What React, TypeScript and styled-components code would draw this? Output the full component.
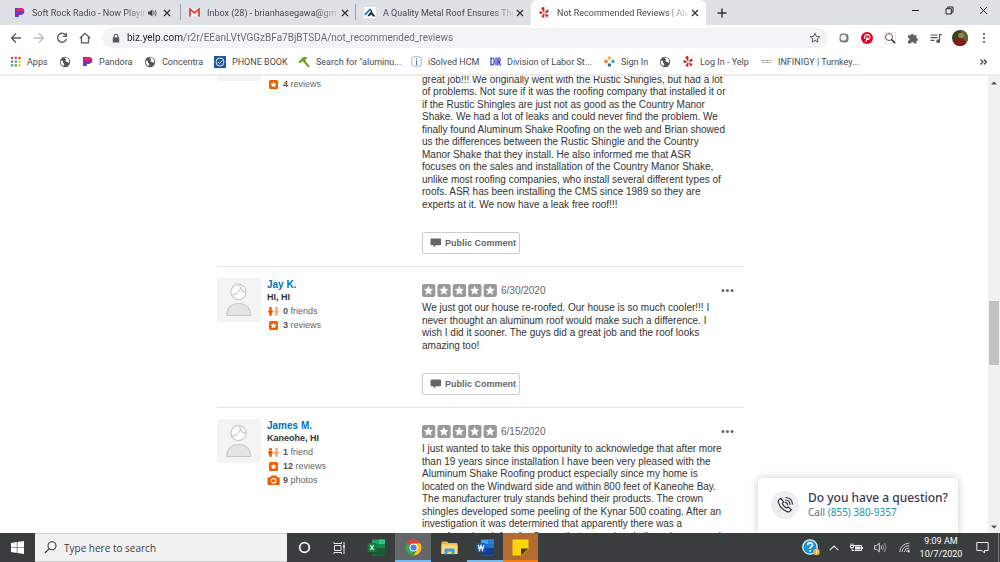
import React from "react";
import styled, { createGlobalStyle, css } from "styled-components";

const uiFont = `"Open Sans", "Noto Sans", sans-serif`;
const pageFont = `"Liberation Sans", Arial, sans-serif`;

const GlobalStyle = createGlobalStyle`
  * { box-sizing: border-box; }
  body { margin: 0; background: #fff; overflow: hidden; }
  button, input { font: inherit; color: inherit; margin: 0; padding: 0; border: 0; background: none; outline: 0; }
  a { color: inherit; text-decoration: none; }
  svg { display: block; flex: none; }
`;

const Screen = styled.div`
  display: flex;
  flex-direction: column;
  height: 100vh;
  font-family: ${uiFont};
`;

/* ---------- browser chrome ---------- */

const TabStrip = styled.header`
  display: flex;
  align-items: stretch;
  height: 25px;
  padding-left: 6px;
  background: #dee1e6;
  color: #45494d;
  font-family: Roboto, sans-serif;
  font-size: 9px;
`;

const Tab = styled.div<{ $active?: boolean; $divider?: boolean }>`
  display: flex;
  align-items: center;
  flex: 0 1 175px;
  min-width: 0;
  gap: 3px;
  padding: 0 6px 0 8px;
  border-radius: 6px 6px 0 0;
  border-right: 1px solid transparent;
  border-image: ${(p) => (p.$divider ? "linear-gradient(transparent 20%, #9a9da1 20%, #9a9da1 78%, transparent 78%) 1" : "none")};
  background: ${(p) => (p.$active ? "#fff" : "transparent")};
`;

const TabTitle = styled.button`
  flex: 1;
  min-width: 0;
  padding-left: 4px;
  white-space: nowrap;
  text-align: left;
  line-height: 14px;
  mask-image: linear-gradient(90deg, #000 84%, rgba(0, 0, 0, 0.15));
`;

const IconButton = styled.button<{ $size?: number }>`
  display: grid;
  place-items: center;
  flex: none;
  width: ${(p) => p.$size ?? 12}px;
  height: ${(p) => p.$size ?? 12}px;
`;

const NewTab = styled(IconButton)`
  align-self: center;
`;

const WindowControls = styled.div`
  display: flex;
  align-items: center;
  gap: 22px;
  height: 21px;
  margin-left: auto;
  padding-right: 11px;
`;

const Toolbar = styled.nav`
  display: flex;
  align-items: center;
  gap: 9px;
  height: 26px;
  padding: 0 9px 0 10px;
  background: #fff;
  color: #5f6368;
`;

const NavButtons = styled.div`
  display: flex;
  gap: 11px;
`;

const Omnibox = styled.label`
  display: flex;
  align-items: center;
  flex: 1;
  gap: 6px;
  height: 20px;
  margin-left: 2px;
  padding: 0 7px 0 9px;
  border-radius: 10px;
  background: #f1f3f4;
`;

const Address = styled.input`
  flex: 1;
  min-width: 0;
  font-family: Roboto, sans-serif;
  font-size: 10px;
  line-height: 14px;
  background: linear-gradient(90deg, #202124 56px, #63676b 56px);
  background-clip: text;
  -webkit-text-fill-color: transparent;
`;

const Extensions = styled.div`
  display: flex;
  align-items: center;
  gap: 9px;
`;

const BookmarksBar = styled.nav`
  display: flex;
  align-items: center;
  height: 25px;
  padding: 0 12px 2px 10px;
  border-bottom: 2px solid #ececec;
  background: #fff;
  color: #484b4f;
  font-family: Roboto, sans-serif;
  font-size: 9px;
`;

const Bookmark = styled.a<{ $width: number }>`
  display: flex;
  align-items: center;
  flex: 0 1 ${(p) => p.$width}px;
  gap: 6px;
  white-space: nowrap;
  line-height: 14px;
`;

const BookmarksMore = styled(IconButton)`
  margin-left: auto;
`;

/* ---------- page ---------- */

const Viewport = styled.div`
  position: relative;
  display: flex;
  flex: 1;
  min-height: 0;
  overflow: hidden;
  background: #fff;
  font-family: ${pageFont};
`;

const PageScroll = styled.main`
  display: grid;
  grid-template-columns: 217px minmax(0, 527px) 1fr;
  align-content: start;
  flex: 1;
  min-width: 0;
  overflow: hidden;
`;

const Feed = styled.div`
  grid-column: 2;
  margin-top: -51px;
`;

const Review = styled.article`
  display: grid;
  grid-template-columns: 44px 161px minmax(0, 1fr);
  padding: 11px 0 12px;
  border-top: 1px solid #e4e4e4;
`;

const Avatar = styled.div`
  display: grid;
  place-items: center;
  width: 44px;
  height: 44px;
  border-radius: 3px;
  background: #f4f4f4;
`;

const Passport = styled.ul`
  margin: 0;
  padding: 0 0 0 6px;
  list-style: none;
  color: #666;
  font-size: 9px;
`;

const PassportName = styled.li`
  height: 13px;
  color: #0073bb;
  font-size: 10px;
  font-weight: 700;
  line-height: 13px;
`;

const PassportPlace = styled.li`
  height: 13px;
  color: #333;
  font-weight: 700;
  line-height: 13px;
`;

const PassportStat = styled.li`
  display: flex;
  align-items: center;
  gap: 3px;
  height: 14px;
  line-height: 14px;

  b { color: #555; }
`;

const ReviewBody = styled.div`
  padding-top: 6px;
`;

const RatingRow = styled.div`
  display: flex;
  align-items: center;
  height: 13px;
  padding-right: 10px;
  gap: 4px;
  color: #666;
  font-size: 10px;

  button { margin-left: auto; }
`;

const ReviewText = styled.p`
  display: grid;
  grid-auto-rows: 13px 12px;
  margin: 4px 0 22px;
  color: #333;
  font-size: 10px;
  line-height: 13px;
  white-space: nowrap;
`;

const CommentButton = styled.button`
  display: flex;
  align-items: center;
  gap: 3px;
  width: 98px;
  height: 22px;
  padding-left: 7px;
  border: 1px solid #ccc;
  border-radius: 2px;
  background: #fff;
  color: #666;
  font-size: 9px;
  font-weight: 700;
  white-space: nowrap;
`;

const ScrollTrack = styled.div`
  display: flex;
  flex-direction: column;
  align-items: center;
  width: 12px;
  padding: 5px 0 4px;
  background: #f1f1f1;
`;

const ScrollThumb = styled.div`
  width: 10px;
  height: 64px;
  margin: 216px 0 auto;
  background: #c1c1c1;
`;

const CallCard = styled.aside`
  position: absolute;
  right: 42px;
  bottom: 0;
  display: flex;
  align-items: center;
  gap: 9px;
  width: 200px;
  height: 55px;
  padding: 0 0 1px 13px;
  border-radius: 4px 4px 0 0;
  background: #fff;
  box-shadow: 0 0 9px rgba(0, 0, 0, 0.22);
  color: #6b6b76;
  font-family: "Noto Sans", sans-serif;
  font-size: 10px;
  line-height: 15px;
  white-space: nowrap;

  a { color: #1d979b; }
`;

const CallIcon = styled.div`
  display: grid;
  place-items: center;
  width: 28px;
  height: 28px;
  border-radius: 50%;
  background: #eee;
`;

const CallTitle = styled.div`
  color: #3b3850;
  font-size: 12px;
  font-weight: 500;
`;

/* ---------- taskbar ---------- */

const Taskbar = styled.footer`
  display: flex;
  align-items: stretch;
  height: 29px;
  background: #393d3d;
  color: #fff;
`;

const TaskButton = styled.button<{ $width: number; $bg?: string; $line?: string }>`
  display: grid;
  place-items: center;
  width: ${(p) => p.$width}px;
  background: ${(p) => p.$bg ?? "none"};
  ${(p) => p.$line && css`box-shadow: inset 0 -2px ${p.$line};`}
`;

const SearchBox = styled.label`
  display: flex;
  align-items: center;
  gap: 7px;
  width: 252px;
  padding-left: 9px;
  border: 1px solid #cfcfcf;
  border-width: 1px 0;
  background: #f1f1f1;
  color: #3d3d3d;

  input { flex: 1; min-width: 0; font-size: 10px; }
  input::placeholder { color: #3d3d3d; opacity: 1; }
`;

const Tray = styled.div`
  display: flex;
  align-items: center;
  margin-left: auto;
  padding-right: 1px;
`;

const Clock = styled.time`
  width: 50px;
  font-family: Roboto, sans-serif;
  font-size: 9px;
  line-height: 13px;
  text-align: center;
  white-space: nowrap;
`;

const DesktopEdge = styled.div`
  width: 1px;
  height: 29px;
  background: #777;
`;

/* ---------- icons ---------- */

const Close = ({ size = 8 }: { size?: number }) => (
  <svg width={size} height={size} viewBox="0 0 8 8" stroke="#303338" strokeWidth="1.3" fill="none">
    <path d="M1 1l6 6M7 1L1 7" />
  </svg>
);

const PandoraIcon = () => (
  <svg width="11" height="11" viewBox="0 0 11 11">
    <path d="M1 1h5.4C9 1 10.3 2.4 10.3 4.200c0 2.200-1.700 3.700-4 3.700H4.700V10H1z" fill="#4a3fe0" />
    <path d="M4.500 1h1.900C9 1 10.300 2.400 10.300 4.200L3.500 5.500 1 2.800z" fill="#e02a5c" />
    <path d="M1 5.500l3.700.5 3.300-1-1.500 2.900H4.700V9L1 7.500z" fill="#9a2bb0" />
  </svg>
);

const GmailIcon = () => (
  <svg width="11" height="9" viewBox="0 0 11 9">
    <path d="M1 0.5h9v8H1z" fill="#fbeeee" />
    <path d="M1 8.5V1.2l4.500 3.700L10 1.200v7.300" fill="none" stroke="#d23f31" strokeWidth="1.700" />
  </svg>
);

const RoofIcon = () => (
  <svg width="12" height="11" viewBox="0 0 12 11">
    <path d="M0 0h12v11H0z" fill="#fff" />
    <path d="M.8 8L6 2.500 8 4.600" fill="none" stroke="#1c6fb3" strokeWidth="1.800" />
    <path d="M3.200 9.200L7.300 4 11.500 9.500H9L7.300 7.600 5.400 9.300z" fill="#1f2937" />
  </svg>
);

const YelpIcon = () => (
  <svg width="11" height="11" viewBox="0 0 10 11" fill="#d32323" stroke="#d32323" strokeWidth="0.300">
    <path d="M2.300.8C3 .3 4 .1 4.600.1l.2 4.400c0 .5-.4.6-.7.2L2 1.500c-.1-.3 0-.5.300-.7z" />
    <path d="M.4 4.200l3 1.200c.4.2.4.6 0 .7L.5 7C0 6.300 0 5 .4 4.200z" />
    <path d="M4 6.900c.3-.3.7-.1.7.3v3.200c-.8.2-2-.3-2.500-1z" />
    <path d="M6 6.900l2.900 1.200c-.2.900-1 1.800-1.800 2.100L5.600 7.500c-.1-.4.100-.7.400-.6z" />
    <path d="M5.700 5.200l2-2.600c.7.400 1.400 1.400 1.500 2.200L6.100 5.900c-.4.100-.7-.3-.4-.7z" />
  </svg>
);

const SpeakerTabIcon = () => (
  <svg width="9" height="8" viewBox="0 0 9 8" fill="#404347">
    <path d="M0 2.600h1.800L4.400.5v7L1.800 5.400H0z" />
    <path d="M5.600 2q1.200 2 0 4M7.200.9q2 3.100 0 6.200" fill="none" stroke="#404347" strokeWidth="0.800" />
  </svg>
);

const GlobeIcon = () => (
  <svg width="12" height="12" viewBox="0 0 12 12">
    <circle cx="6" cy="6" r="5.200" fill="#54575b" />
    <path d="M1.800 4.500c1.500 0 2.400.7 2.200 1.800-.2.900 1.300.9 1.200 2.200 0 .7-.6 1.200-1 1.600C2.200 9 1.200 7 1.800 4.500zM5.500 1.700c.4 1.300 1.300.8 1.600 1.700.3.900-.9 1-.6 1.800.4.700 1.700.3 2.500 1 .6.500.6 1 1 .6.700-2-.5-4.600-2.500-5.300z" fill="#fff" />
  </svg>
);

const AppsIcon = () => (
  <svg width="11" height="11" viewBox="0 0 11 11">
    {["#ea4335", "#ea4335", "#ea4335", "#34a853", "#4285f4", "#fbbc05", "#34a853", "#34a853", "#fbbc05"].map((c, i) => (
      <rect key={i} x={1 + (i % 3) * 3.7} y={0.8 + Math.floor(i / 3) * 3.7} width="2.200" height="2.200" fill={c} />
    ))}
  </svg>
);

const PhoneBookIcon = () => (
  <svg width="12" height="12" viewBox="0 0 12 12">
    <path d="M0 0h12v12H0z" fill="#1b59a5" />
    <circle cx="6" cy="6" r="4" fill="none" stroke="#dbe8f6" strokeWidth="1" />
    <path d="M4 6l1.500 1.500L8.200 4.500" fill="none" stroke="#dbe8f6" strokeWidth="1" />
  </svg>
);

const HammerIcon = () => (
  <svg width="12" height="12" viewBox="0 0 12 12">
    <path d="M0 6.400L4.500 1.600c1.600-.9 3.300-.9 5.500-.2L7.300 3.200l.8 1L6.600 5.800 5 4.600 2.600 7z" fill="#6b9a1f" />
    <path d="M5.500 4.500l5.500 6.300" stroke="#6b9a1f" strokeWidth="2" />
  </svg>
);

const InfoIcon = () => (
  <svg width="11" height="11" viewBox="0 0 11 11" fill="none" stroke="#4d78b5">
    <rect x="0.800" y="0.800" width="9.400" height="9.400" rx="2" stroke="#9bb4d6" />
    <path d="M5.500 4.500V9M5.500 2.300v1.200" strokeWidth="1.200" />
  </svg>
);

const DirIcon = () => (
  <svg width="11" height="9" viewBox="0 0 11 9" fill="none" stroke="#2c2fe0" strokeWidth="1.200">
    <path d="M1 1v7h1.200C4 8 4.200 6.500 4.200 4.500S4 1 2.200 1zM6 .5v8M7.900 8.500V1h1c1.800 0 1.800 3.400 0 3.400h-1M9 4.500l1.500 4" />
  </svg>
);

const SignInIcon = () => (
  <svg width="11" height="11" viewBox="0 0 11 11">
    <path d="M3.800.5h3.200v3H3.800z" fill="#e9b04c" />
    <path d="M.5 3.800h3v3.200h-3z" fill="#e8793a" />
    <path d="M7.500 3.800h3v3.200h-3z" fill="#35a0c4" />
    <path d="M3.800 7.500h3.200v3H3.800z" fill="#36718c" />
  </svg>
);

const InfinigyIcon = () => (
  <svg width="11" height="5" viewBox="0 0 11 5" stroke="#a3a3a3" fill="none">
    <path d="M0 1.500h11M1 3.500h9" strokeDasharray="2 0.500" />
  </svg>
);

const NavIcon = ({ d, color = "#55595d" }: { d: string; color?: string }) => (
  <svg width="12" height="12" viewBox="0 0 12 12" fill="none" stroke={color} strokeWidth="1.300">
    <path d={d} />
  </svg>
);

const LockIcon = () => (
  <svg width="10" height="11" viewBox="0 0 10 11">
    <path d="M1.800 4.300h6.400v5.200H1.800z" fill="#54585c" />
    <path d="M3.200 4.500V3a1.800 1.800 0 013.600 0v1.500" fill="none" stroke="#54585c" strokeWidth="1.100" />
  </svg>
);

const StarOutline = () => (
  <svg width="12" height="12" viewBox="0 0 12 12" fill="none" stroke="#55595d" strokeWidth="1">
    <path d="M6 1.300l1.400 3.100 3.400.3-2.600 2.200.8 3.300L6 8.400l-3 1.800.8-3.300L1.200 4.700l3.400-.3z" />
  </svg>
);

const ChatBubble = () => (
  <svg width="12" height="10" viewBox="0 0 12 10" fill="#666">
    <path d="M1.500.5h8.500q1 0 1 1v4.700q0 1-1 1H6L3.600 9.400V7.200H1.500q-1 0-1-1V1.500q0-1 1-1z" />
  </svg>
);

const STAR = "M6.500 2l1.300 3 3.100.3-2.400 2 .8 3.200-2.800-1.700-2.800 1.700.8-3.200-2.400-2 3.100-.3z";

const RatingStars = () => (
  <svg width="75" height="13" viewBox="0 0 75 13" role="img" aria-label="5 star rating">
    {[0, 1, 2, 3, 4].map((i) => (
      <g key={i} transform={`translate(${i * 15.4} 0)`}>
        <rect width="13.300" height="13" rx="2" fill="#999" />
        <path d={STAR} fill="#fff" stroke="#fff" strokeWidth="0.300" />
      </g>
    ))}
  </svg>
);

const AvatarArt = () => (
  <svg width="44" height="44" viewBox="0 0 44 44" fill="#e4e4e4" stroke="#c8c8c8" strokeWidth="1.200">
    <circle cx="21.500" cy="14" r="7.600" fill="#fff" />
    <path d="M14.500 16.800c4 .6 8-2 9-7.300.6 2.800 2.600 4.600 5.300 4.700M23.500 9.500l-1-2.500" fill="none" />
    <path d="M9.700 37.500c0-7.500 5-12 12-12s12 4.500 12 12z" />
  </svg>
);

const FriendsIcon = () => (
  <svg width="13" height="11" viewBox="0 0 13 11">
    <g fill="#f15c00">
      <circle cx="3.500" cy="2.200" r="1.500" />
      <path d="M.8 5.800l1.400-2h2.600l1.400 2L4.800 7.200v2.600H2.200V7.200z" />
    </g>
    <g fill="#f9a97a">
      <circle cx="9.500" cy="2.200" r="1.500" />
      <path d="M6.900 5.800l1.300-2h2.600l1.300 2-1.400 1.400v2.600H8.300V7.200z" />
    </g>
  </svg>
);

const ReviewsIcon = () => (
  <svg width="13" height="11" viewBox="0 0 13 11">
    <rect x="2" y="1" width="9" height="9" rx="1.500" fill="#f15c00" />
    <path d="M6.500 2.600l.9 2 2.200.2L8 6.200l.5 2.100-2-1.100-2 1.100.5-2.100-1.600-1.400 2.200-.2z" fill="#fff" />
  </svg>
);

const PhotosIcon = () => (
  <svg width="13" height="11" viewBox="0 0 13 11">
    <path d="M1.500 2.200h1.900L4.500.6h4.500l1 1.600h1.700q1 0 1 1v5.800q0 1-1 1H1.500q-1 0-1-1V3.200q0-1 1-1z" fill="#f15c00" />
    <circle cx="6.600" cy="5.800" r="2.300" fill="none" stroke="#fff" strokeWidth="1.200" />
  </svg>
);

const Dots = () => (
  <svg width="13" height="5" viewBox="0 0 13 5" fill="#666">
    <circle cx="2" cy="2.500" r="1.500" />
    <circle cx="6.500" cy="2.500" r="1.500" />
    <circle cx="11" cy="2.500" r="1.500" />
  </svg>
);

const PhoneIcon = () => (
  <svg width="18" height="18" viewBox="0 0 18 18" fill="none" stroke="#2f2c49" strokeWidth="1.200" strokeLinecap="round" strokeLinejoin="round">
    <path d="M3.200 3.600l1.600-1.200 2.800 3.400-1.300 1.600c.9 2 2.300 3.500 4.200 4.600l1.800-1.100 3 2.800-1.400 1.700c-.8.700-1.900.6-2.900.2C6.900 14 3.800 10.700 2.400 6.500c-.3-1.100 0-2.200.8-2.900z" />
    <path d="M9.300 6.400c1.300.1 2.200 1 2.300 2.300M9.600 4c2.500.2 4.200 1.900 4.400 4.400M10 1.500c3.800.4 6.200 2.800 6.500 6.500" />
  </svg>
);

const OfficeIcon = ({ kind }: { kind: "excel" | "word" }) => {
  const c = kind === "excel" ? ["#21a366", "#33c481", "#107c41", "#185c37"] : ["#41a5ee", "#2b7cd3", "#185abd", "#103f91"];
  return (
    <svg width="19" height="17" viewBox="0 0 19 17">
      <rect x="5" y="0.500" width="13" height="16" rx="1" fill={c[0]} />
      <path d="M12 .5h5q1 0 1 1v3.500h-6z" fill={c[1]} />
      <path d="M5 5h13v4H5z" fill={c[2]} opacity="0.700" />
      <path d="M5 9h13v6.500q0 1-1 1H6q-1 0-1-1z" fill={c[3]} />
      <rect x="0.500" y="4" width="9" height="9" rx="1" fill={c[2]} />
      <path d={kind === "excel" ? "M3.200 6l3.600 5M6.800 6l-3.600 5" : "M2.200 6l1.400 5L5 6.500 6.400 11l1.400-5"} stroke="#fff" strokeWidth="1.200" fill="none" />
    </svg>
  );
};

const ChromeIcon = () => (
  <svg width="17" height="17" viewBox="0 0 17 17">
    <path d="M8.500 8.500L1.600 4.500A8 8 0 0115.400 4.500z" fill="#ea4335" />
    <path d="M8.500 8.500L1.600 4.500A8 8 0 008.500 16.500z" fill="#34a853" />
    <path d="M8.500 4.500h6.900A8 8 0 018.500 16.500l3.500-6z" fill="#fbc116" />
    <circle cx="8.500" cy="8.500" r="4" fill="#fff" />
    <circle cx="8.500" cy="8.500" r="3.100" fill="#4285f4" />
  </svg>
);

/* ---------- data ---------- */

type ReviewData = {
  name?: string;
  place?: string;
  friends?: [string, string];
  reviews: [string, string];
  photos?: [string, string];
  date?: string;
  lines: string[];
};

const reviews: ReviewData[] = [
  {
    reviews: ["4", "reviews"],
    lines: [
      "",
      "great job!!! We originally went with the Rustic Shingles, but had a lot",
      "of problems. Not sure if it was the roofing company that installed it or",
      "if the Rustic Shingles are just not as good as the Country Manor",
      "Shake. We had a lot of leaks and could never find the problem. We",
      "finally found Aluminum Shake Roofing on the web and Brian showed",
      "us the differences between the Rustic Shingle and the Country",
      "Manor Shake that they install. He also informed me that ASR",
      "focuses on the sales and installation of the Country Manor Shake,",
      "unlike most roofing companies, who install several different types of",
      "roofs. ASR has been installing the CMS since 1989 so they are",
      "experts at it. We now have a leak free roof!!!",
    ],
  },
  {
    name: "Jay K.",
    place: "HI, HI",
    friends: ["0", "friends"],
    reviews: ["3", "reviews"],
    date: "6/30/2020",
    lines: [
      "We just got our house re-roofed. Our house is so much cooler!!! I",
      "never thought an aluminum roof would make such a difference. I",
      "wish I did it sooner. The guys did a great job and the roof looks",
      "amazing too!",
    ],
  },
  {
    name: "James M.",
    place: "Kaneohe, HI",
    friends: ["1", "friend"],
    reviews: ["12", "reviews"],
    photos: ["9", "photos"],
    date: "6/15/2020",
    lines: [
      "I just wanted to take this opportunity to acknowledge that after more",
      "than 19 years since installation I have been very pleased with the",
      "Aluminum Shake Roofing product especially since my home is",
      "located on the Windward side and within 800 feet of Kaneohe Bay.",
      "The manufacturer truly stands behind their products. The crown",
      "shingles developed some peeling of the Kynar 500 coating. After an",
      "investigation it was determined that apparently there was a",
      "manufacturing defect for Crown that caused and allowed some peel",
    ],
  },
];

const tabs = [
  { title: "Soft Rock Radio - Now Playin", icon: <PandoraIcon />, sound: true, divider: true },
  { title: "Inbox (28) - brianhasegawa@gm", icon: <GmailIcon />, divider: true },
  { title: "A Quality Metal Roof Ensures The", icon: <RoofIcon /> },
  { title: "Not Recommended Reviews | Alu", icon: <YelpIcon />, active: true },
];

const bookmarks = [
  { label: "Apps", icon: <AppsIcon />, width: 49 },
  { label: "", icon: <GlobeIcon />, width: 23 },
  { label: "Pandora", icon: <PandoraIcon />, width: 62 },
  { label: "Concentra", icon: <GlobeIcon />, width: 70 },
  { label: "PHONE BOOK", icon: <PhoneBookIcon />, width: 84 },
  { label: "Search for \"aluminu...", icon: <HammerIcon />, width: 113 },
  { label: "iSolved HCM", icon: <InfoIcon />, width: 79 },
  { label: "Division of Labor St...", icon: <DirIcon />, width: 114 },
  { label: "Sign In", icon: <SignInIcon />, width: 55 },
  { label: "", icon: <GlobeIcon />, width: 24 },
  { label: "Log In - Yelp", icon: <YelpIcon />, width: 78 },
  { label: "INFINIGY | Turnkey...", icon: <InfinigyIcon />, width: 110 },
];

const Stat = ({ icon, value }: { icon: React.ReactNode; value: [string, string] }) => (
  <PassportStat>
    {icon}
    <span><b>{value[0]}</b> {value[1]}</span>
  </PassportStat>
);

const ReviewItem = ({ data }: { data: ReviewData }) => (
  <Review>
    <Avatar><AvatarArt /></Avatar>
    <Passport>
      <PassportName>{data.name && <a href="#profile">{data.name}</a>}</PassportName>
      <PassportPlace>{data.place}</PassportPlace>
      {data.friends ? <Stat icon={<FriendsIcon />} value={data.friends} /> : <PassportStat />}
      <Stat icon={<ReviewsIcon />} value={data.reviews} />
      {data.photos && <Stat icon={<PhotosIcon />} value={data.photos} />}
    </Passport>
    <ReviewBody>
      <RatingRow>
        {data.date && (
          <>
            <RatingStars />
            <span>{data.date}</span>
            <IconButton aria-label="More options" $size={13}><Dots /></IconButton>
          </>
        )}
      </RatingRow>
      <ReviewText>
        {data.lines.map((line, i) => <span key={i}>{line}</span>)}
      </ReviewText>
      <CommentButton><ChatBubble />Public Comment</CommentButton>
    </ReviewBody>
  </Review>
);

export default function App() {
  return (
    <Screen>
      <GlobalStyle />
      <TabStrip>
        {tabs.map((t) => (
          <Tab key={t.title} $active={t.active} $divider={t.divider}>
            {t.icon}
            <TabTitle>{t.title}</TabTitle>
            {t.sound && <SpeakerTabIcon />}
            <IconButton aria-label="Close tab" $size={t.sound ? 14 : 8}><Close /></IconButton>
          </Tab>
        ))}
        <NewTab aria-label="New tab" $size={32}>
          <svg width="10" height="10" viewBox="0 0 10 10" stroke="#2d3034" strokeWidth="1.400"><path d="M5 .5v9M.5 5h9" /></svg>
        </NewTab>
        <WindowControls>
          <IconButton aria-label="Minimize">
            <svg width="9" height="9" viewBox="0 0 9 9" stroke="#222"><path d="M1 4.500h7" /></svg>
          </IconButton>
          <IconButton aria-label="Restore">
            <svg width="9" height="9" viewBox="0 0 9 9" fill="none" stroke="#222"><path d="M1 2.700h5.300v5.300H1zM2.700 2.500V1H8v5.300H6.500" /></svg>
          </IconButton>
          <IconButton aria-label="Close window">
            <svg width="9" height="9" viewBox="0 0 9 9" stroke="#222"><path d="M1 1l7 7M8 1L1 8" /></svg>
          </IconButton>
        </WindowControls>
      </TabStrip>

      <Toolbar>
        <NavButtons>
          <IconButton aria-label="Back"><NavIcon d="M11 6H1.500M6 1.500L1.500 6 6 10.500" /></IconButton>
          <IconButton aria-label="Forward"><NavIcon color="#b9bbbe" d="M1 6h9.500M6 1.500L10.500 6 6 10.500" /></IconButton>
          <IconButton aria-label="Reload"><NavIcon d="M9.800 3.200A4.500 4.500 0 1010.400 7M10.400 1v3.300H7" /></IconButton>
          <IconButton aria-label="Home"><NavIcon d="M.8 6.300L6 1.300l5.200 5M2.500 5.200v5.600h7V5.200" /></IconButton>
        </NavButtons>
        <Omnibox>
          <LockIcon />
          <Address aria-label="Address" defaultValue="biz.yelp.com/r2r/EEanLVtVGGzBFa7BjBTSDA/not_recommended_reviews" />
          <IconButton aria-label="Bookmark page"><StarOutline /></IconButton>
        </Omnibox>
        <Extensions>
          <IconButton aria-label="Extension" $size={14}>
            <svg width="10" height="10" viewBox="0 0 10 10"><rect x="0.500" y="0.500" width="9" height="9" rx="3.500" fill="#777b7f" /><circle cx="4.500" cy="4.700" r="2.900" fill="#f4f4f4" /></svg>
          </IconButton>
          <IconButton aria-label="Pinterest" $size={14}>
            <svg width="12" height="12" viewBox="0 0 12 12"><circle cx="6" cy="6" r="6" fill="#e60023" /><path d="M3.900 6.600C2.700 4.300 4.300 2.600 6.200 2.600c2 0 3 1.300 2.600 3-.4 1.700-2.100 2.200-2.800 1M6.300 4.600L5 9.800" fill="none" stroke="#fff" strokeWidth="1.200" /></svg>
          </IconButton>
          <IconButton aria-label="Search tool" $size={14}>
            <svg width="12" height="12" viewBox="0 0 12 12" fill="none"><path d="M.5.5h11v11H.5z" stroke="#f9dede" /><circle cx="5" cy="5" r="3.500" stroke="#555" /><path d="M7.500 7.500L11 11" stroke="#222" strokeWidth="1.500" /></svg>
          </IconButton>
          <IconButton aria-label="Extensions" $size={14}>
            <svg width="12" height="12" viewBox="0 0 12 12" fill="#5f6368"><path d="M1 3.200h2.700a1.500 1.500 0 113 0h2.800V6a1.500 1.500 0 110 3v2.500H6.900a1.500 1.500 0 10-3 0H1V8.700a1.500 1.500 0 100-3z" /></svg>
          </IconButton>
          <IconButton aria-label="Media" $size={14}>
            <svg width="12" height="11" viewBox="0 0 12 11" stroke="#55595d" fill="none" strokeWidth="1.200"><path d="M.5 2h7M.5 4.700h7M.5 7.400h4M9.500 8V1.600h2.500" /><circle cx="8.200" cy="8.200" r="1.300" fill="#55595d" /></svg>
          </IconButton>
          <IconButton aria-label="Profile" $size={16}>
            <svg width="16" height="16" viewBox="0 0 16 16">
              <clipPath id="face"><circle cx="8" cy="8" r="8" /></clipPath>
              <g clipPath="url(#face)"><path d="M0 0h16v16H0z" fill="#39401c" /><path d="M9 0h7v12H9z" fill="#5c6b2f" /><circle cx="9" cy="5.500" r="2.800" fill="#a07c58" /><path d="M2 16V11l4-2.500 6 .5 3 4v3z" fill="#8c1620" /></g>
            </svg>
          </IconButton>
          <IconButton aria-label="Menu" $size={14}>
            <svg width="4" height="12" viewBox="0 0 4 12" fill="#55595d"><circle cx="2" cy="2" r="1.100" /><circle cx="2" cy="6" r="1.100" /><circle cx="2" cy="10" r="1.100" /></svg>
          </IconButton>
        </Extensions>
      </Toolbar>

      <BookmarksBar>
        {bookmarks.map((b, i) => (
          <Bookmark key={i} href="#bookmark" aria-label={b.label || "Site"} $width={b.width}>
            {b.icon}
            {b.label && <span>{b.label}</span>}
          </Bookmark>
        ))}
        <BookmarksMore aria-label="More bookmarks" $size={10}>
          <svg width="7" height="6" viewBox="0 0 7 6" fill="none" stroke="#444" strokeWidth="1.200"><path d="M.5.5L3 3 .5 5.500M3.800.5L6.300 3 3.800 5.500" /></svg>
        </BookmarksMore>
      </BookmarksBar>

      <Viewport>
        <PageScroll>
          <Feed>
            {reviews.map((r, i) => <ReviewItem key={i} data={r} />)}
          </Feed>
        </PageScroll>
        <ScrollTrack>
          <svg width="6" height="4" viewBox="0 0 6 4" fill="#505050"><path d="M0 3.500L3 .5l3 3z" /></svg>
          <ScrollThumb />
          <svg width="6" height="4" viewBox="0 0 6 4" fill="#505050"><path d="M0 .5l3 3 3-3z" /></svg>
        </ScrollTrack>
        <CallCard>
          <CallIcon><PhoneIcon /></CallIcon>
          <div>
            <CallTitle>Do you have a question?</CallTitle>
            Call <a href="tel:8553809357">(855) 380-9357</a>
          </div>
        </CallCard>
      </Viewport>

      <Taskbar>
        <TaskButton aria-label="Start" $width={35}>
          <svg width="13" height="13" viewBox="0 0 13 13" fill="#fff"><path d="M0 1.900L5.800 1v5.200H0zM6.400.9L13 0v6.200H6.400zM0 6.800h5.800V12L0 11.100zM6.400 6.800H13V13l-6.600-.9z" /></svg>
        </TaskButton>
        <SearchBox>
          <svg width="13" height="13" viewBox="0 0 13 13" fill="none" stroke="#333" strokeWidth="1.100"><circle cx="8" cy="4.800" r="4" /><path d="M5 7.800L.8 12" /></svg>
          <input aria-label="Search" placeholder="Type here to search" />
        </SearchBox>
        <TaskButton aria-label="Cortana" $width={35}>
          <svg width="13" height="13" viewBox="0 0 13 13" fill="none" stroke="#f4f4f4" strokeWidth="1.800"><circle cx="6.500" cy="6.500" r="4.800" /></svg>
        </TaskButton>
        <TaskButton aria-label="Task view" $width={35}>
          <svg width="13" height="12" viewBox="0 0 13 12" fill="none" stroke="#e8e8e8"><path d="M1.500 3.500h6.500v5H1.500zM1 0v1.500h7.500V0M1 12v-1.500h7.500V12M11 0v12" /><path d="M10 3.500h2v2h-2z" fill="#e8e8e8" stroke="none" /></svg>
        </TaskButton>
        <TaskButton aria-label="Excel" $width={38}><OfficeIcon kind="excel" /></TaskButton>
        <TaskButton aria-label="Chrome" $width={36} $bg="#646767" $line="#76b9ed"><ChromeIcon /></TaskButton>
        <TaskButton aria-label="File Explorer" $width={36}>
          <svg width="17" height="14" viewBox="0 0 17 14"><path d="M.5 1.500q0-1 1-1h4.500l1.500 1.500h8q1 0 1 1V13H.5z" fill="#e9b44c" /><path d="M.5 3.500h16V13H.5z" fill="#ffd977" /><path d="M3.500 13.500V8.500q0-1 1-1h8q1 0 1 1v5h-3v-3h-4v3z" fill="#3d9be0" /></svg>
        </TaskButton>
        <TaskButton aria-label="Word" $width={36} $line="#76b9ed"><OfficeIcon kind="word" /></TaskButton>
        <TaskButton aria-label="Sticky Notes" $width={35} $bg="#b36b31" $line="#f57c14">
          <svg width="17" height="17" viewBox="0 0 17 17"><path d="M.5.5h16v9.500l-7 6.500H.5z" fill="#fdd50a" /><path d="M9 9.500h7.500l-7.500 7z" fill="#3a3a3a" /></svg>
        </TaskButton>
        <Tray>
          <TaskButton aria-label="Help" $width={23}>
            <svg width="18" height="17" viewBox="0 0 18 17"><circle cx="8" cy="8" r="7.200" fill="#1593d6" stroke="#e8f6ff" strokeWidth="1.300" /><path d="M5.600 6.200C5.700 3 10.800 3.200 10.500 6c-.2 1.600-2.300 1.600-2.400 3.700M8.100 11v1.700" stroke="#fff" strokeWidth="1.600" fill="none" /><circle cx="14.500" cy="13" r="3.200" fill="#f5b325" /><path d="M14.500 11.300v3.400" stroke="#fff" /></svg>
          </TaskButton>
          <TaskButton aria-label="Show hidden icons" $width={23}>
            <svg width="10" height="6" viewBox="0 0 10 6" fill="none" stroke="#eee" strokeWidth="1.100"><path d="M.8 5.200L5 1l4.200 4.200" /></svg>
          </TaskButton>
          <TaskButton aria-label="Battery" $width={23}>
            <svg width="13" height="9" viewBox="0 0 13 9" fill="none" stroke="#eee"><path d="M3.500 2.500h8v5h-7M12.500 4v2M1 .5v2M3 .5v2M.5 2.500h3v2h-3zM2 4.500v3h2" /><path d="M5 3.500h5.500v3H5z" fill="#eee" stroke="none" /></svg>
          </TaskButton>
          <TaskButton aria-label="Volume" $width={24}>
            <svg width="13" height="11" viewBox="0 0 13 11" fill="none" stroke="#eee" strokeWidth="0.900"><path d="M.6 3.700h2L5.300 1.200v8.600L2.600 7.300h-2zM7 3.800q1.100 1.700 0 3.400" /><path d="M8.700 2.500q2 3 0 6M10.500 1q2.800 4.500 0 9" opacity="0.600" /></svg>
          </TaskButton>
          <TaskButton aria-label="Network" $width={24}>
            <svg width="11" height="11" viewBox="0 0 11 11" fill="none" stroke="#ddd" strokeWidth="0.900"><path d="M.7 10Q1.500 2 10.300 1M3 10q.6-5.800 7.300-6.500M5.300 10q.5-3.700 5-4.200M7.500 10q.3-1.700 2.800-2" /><circle cx="9.700" cy="9.500" r="1" fill="#fff" stroke="none" /></svg>
          </TaskButton>
          <Clock>9:09 AM<br />10/7/2020</Clock>
          <TaskButton aria-label="Notifications" $width={32}>
            <svg width="13" height="13" viewBox="0 0 13 13" fill="none" stroke="#eee"><path d="M.8 1.500h11.400v8H8.500v2.500L6 9.500H.8z" /></svg>
          </TaskButton>
          <DesktopEdge />
        </Tray>
      </Taskbar>
    </Screen>
  );
}
